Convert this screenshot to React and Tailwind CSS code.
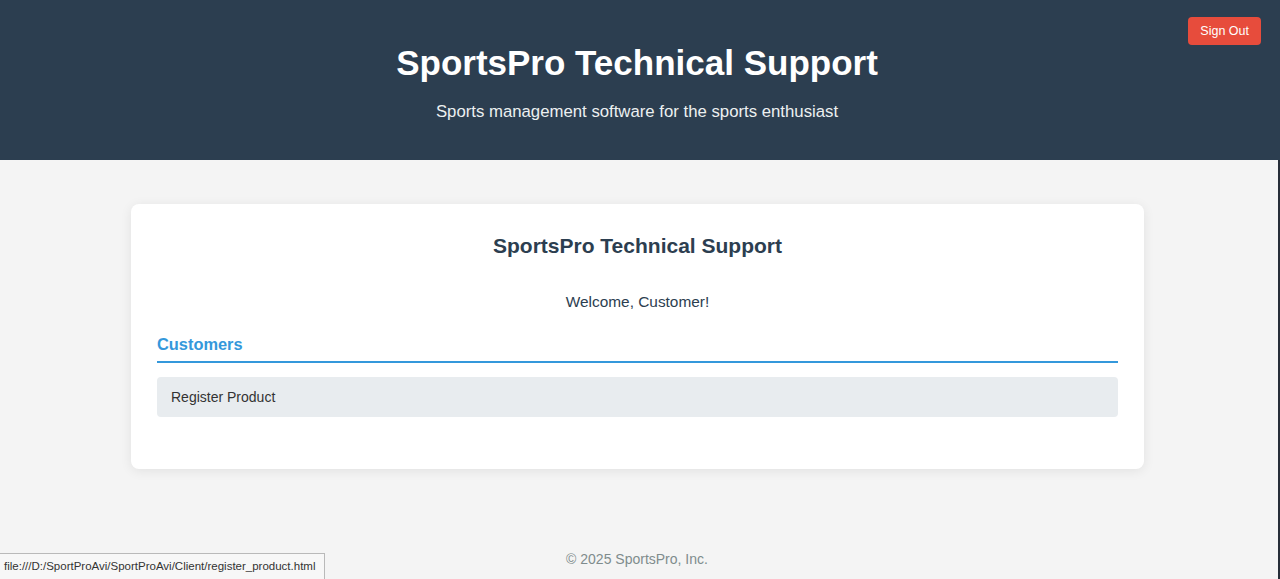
export default function App() {
  return (
    <div className="relative min-h-[579px] flex flex-col bg-[#f4f4f4] font-['Liberation_Sans',Arial,sans-serif]">
      {/* Header */}
      <header className="relative bg-[#2c3e50] text-white text-center pt-[42px] pb-[38px] pr-[6px]">
        <h1 className="text-[35px] leading-[41px] font-bold">
          SportsPro Technical Support
        </h1>
        <p className="mt-[19px] text-[16.75px] leading-[20px] text-[#ecf0f1]">
          Sports management software for the sports enthusiast
        </p>
        <button className="absolute top-[17px] right-[19px] h-[28px] px-[12px] rounded bg-[#e74c3c] text-white text-[12.5px]">
          Sign Out
        </button>
      </header>

      {/* Main */}
      <main className="flex-1 flex flex-col border-r-2 border-[#262d38]">
        <div className="pt-[44px] pl-[131px] pr-[134px]">
          <div className="bg-white rounded-lg shadow-[0_2px_12px_rgba(0,0,0,0.08)] pt-[30px] pb-[52px] px-[26px]">
            <h2 className="text-center text-[21px] leading-[24px] font-bold text-[#2c3e50]">
              SportsPro Technical Support
            </h2>
            <p className="mt-[34px] text-center text-[15.4px] leading-[19px] text-[#2c3e50]">
              Welcome, Customer!
            </p>
            <h3 className="mt-[23px] pb-[7px] border-b-2 border-[#3498db] text-[16.4px] leading-[20px] font-bold text-[#3498db]">
              Customers
            </h3>
            <ul className="mt-[14px]">
              <li className="h-[40px] flex items-center px-[14px] rounded bg-[#e8ecef] text-[14px] text-[#333]">
                Register Product
              </li>
            </ul>
          </div>
        </div>

        <footer className="mt-auto pb-[11px] pr-[4px] text-center text-[14px] leading-[18px] text-[#7f8c8d]">
          © 2025 SportsPro, Inc.
        </footer>
      </main>

      {/* Browser status bar */}
      <div className="absolute left-0 bottom-0 h-[26px] w-[325px] flex items-center px-[4px] bg-[#f7f7f7] border border-l-0 border-b-0 border-[#b9b9b9] text-[11.5px] text-[#333] font-['Liberation_Sans',Arial,sans-serif]">
        file:///D:/SportProAvi/SportProAvi/Client/register_product.html
      </div>
    </div>
  );
}
